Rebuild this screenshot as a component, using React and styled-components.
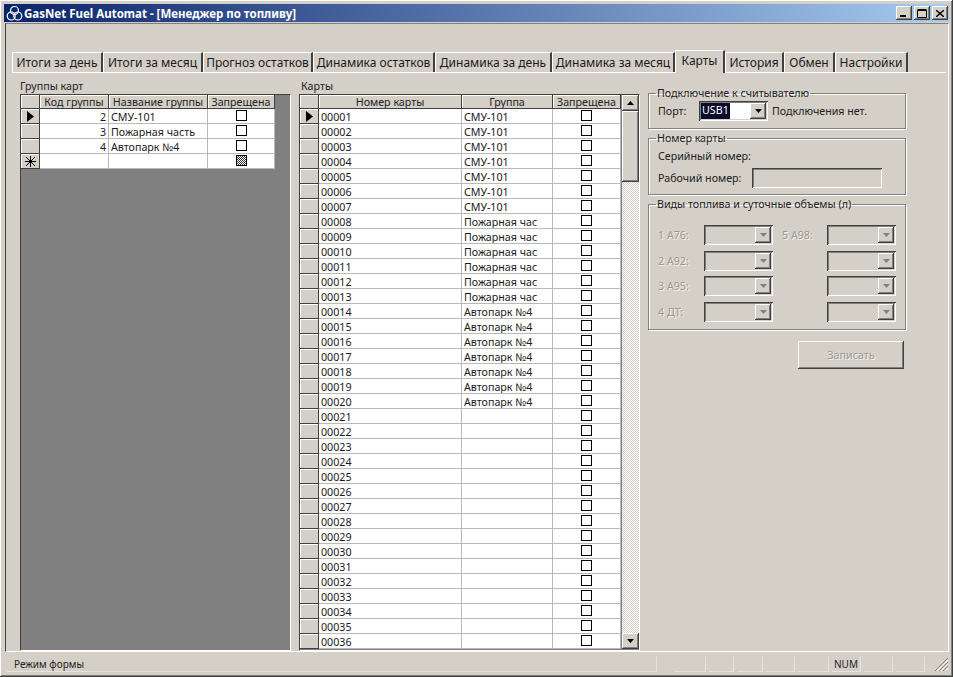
import React from 'react';
import styled, { createGlobalStyle, css } from 'styled-components';

const GlobalStyle = createGlobalStyle`
  html, body {
    margin: 0;
    padding: 0;
    background: #d4d0c8;
  }
  * {
    box-sizing: border-box;
  }
`;

const raised = css`
  box-shadow: inset -1px -1px #404040, inset 1px 1px #fff, inset -2px -2px #808080, inset 2px 2px #d4d0c8;
`;

const sunken = css`
  box-shadow: inset 1px 1px #404040, inset -1px -1px #fff, inset 2px 2px #808080, inset -2px -2px #d4d0c8;
`;

const Window = styled.div`
  width: 953px;
  height: 677px;
  padding: 4px;
  display: flex;
  flex-direction: column;
  background: #d4d0c8;
  overflow: hidden;
  font-family: "Noto Sans", "DejaVu Sans", sans-serif;
  font-size: 10.7px;
  color: #000;
  ${raised}
`;

const TitleBar = styled.div`
  height: 18px;
  flex: none;
  display: flex;
  align-items: center;
  padding: 0 1px 0 2px;
  background: linear-gradient(90deg, #0a246a 0%, #a6caf0 100%);
  color: #fff;
  font-weight: bold;
  font-size: 11.5px;
`;

const TitleText = styled.span`
  flex: 1;
  margin-left: 1px;
  white-space: nowrap;
`;

const CaptionButton = styled.button`
  width: 16px;
  height: 14px;
  margin-left: ${(p) => p.$gap || 0}px;
  padding: 0;
  border: 0;
  display: flex;
  align-items: center;
  justify-content: center;
  background: #d4d0c8;
  ${raised}
`;

const Client = styled.div`
  flex: 1;
  min-height: 0;
  margin: 1px 0 0 1px;
  display: flex;
  flex-direction: column;
  padding-top: 26px;
  border: 1px solid;
  border-color: #808080 #fff #fff #404040;
`;

const TabStrip = styled.div`
  height: 23px;
  flex: none;
  margin: 0 2px 0 6px;
  display: flex;
  align-items: flex-end;
  border-bottom: 1px solid #fff;
`;

const Tab = styled.div`
  width: ${(p) => p.$w}px;
  height: ${(p) => (p.$active ? 23 : 20)}px;
  margin-bottom: ${(p) => (p.$active ? -1 : 0)}px;
  padding-bottom: ${(p) => (p.$active ? 3 : 0)}px;
  flex: none;
  display: flex;
  align-items: center;
  justify-content: center;
  white-space: nowrap;
  font-size: 12px;
  color: #1a1a1a;
  background: #d4d0c8;
  border-top: 1px solid #fff;
  border-left: 1px solid #fff;
  border-right: 2px solid #404040;
`;

const Content = styled.div`
  flex: 1;
  min-height: 0;
  display: flex;
  gap: 8px;
  padding: 7px 0 0 14px;
`;

const Column = styled.div`
  width: ${(p) => p.$w}px;
  flex: none;
  display: flex;
  flex-direction: column;
`;

const SideColumn = styled(Column)`
  margin-top: 7px;
`;

const Caption = styled.div`
  height: 14px;
  padding-left: ${(p) => p.$pad || 0}px;
  line-height: 12px;
  color: #222;
`;

const GridFrame = styled.div`
  flex: 1;
  min-height: 0;
  display: flex;
  align-items: flex-start;
  overflow: hidden;
  background: #808080;
  border: 1px solid;
  border-color: #404040 #fff #fff #404040;
`;

const Table = styled.table`
  flex: none;
  table-layout: fixed;
  border-collapse: separate;
  border-spacing: 0;
  width: ${(p) => p.$w}px;
  font-size: inherit;
`;

const HeadCell = styled.th`
  width: ${(p) => p.$w}px;
  height: 14px;
  padding: 0;
  font-weight: normal;
  line-height: 12px;
  text-align: center;
  white-space: nowrap;
  overflow: hidden;
  background: #d4d0c8;
  color: #222;
  border-right: 1px solid #404040;
  border-bottom: 1px solid #404040;
  box-shadow: inset 1px 1px #fff;
`;

const RowHead = styled.td`
  height: 15px;
  padding: 0;
  background: #d4d0c8;
  border-right: 1px solid #404040;
  border-bottom: 1px solid #404040;
  box-shadow: inset 1px 1px #fff;
  text-align: center;
  line-height: 0;
`;

const Cell = styled.td`
  height: 15px;
  padding: 2px 2px 0;
  line-height: 12px;
  background: #fff;
  color: #1a1a1a;
  white-space: nowrap;
  overflow: hidden;
  text-align: ${(p) => p.$align || 'left'};
  border-right: 1px solid #b9b9b9;
  border-bottom: 1px solid #b9b9b9;
`;

const CheckCell = styled(Cell)`
  padding: 0;
  vertical-align: top;
`;

const Check = styled.div`
  width: 11px;
  height: 11px;
  margin: 1px auto 0;
  border: 1px solid #000;
  background: ${(p) => (p.$mixed
    ? 'repeating-conic-gradient(#333 0% 25%, #fff 0% 50%) 0 0 / 2px 2px'
    : '#fff')};
`;

const Scrollbar = styled.div`
  width: 17px;
  align-self: stretch;
  flex: none;
  margin: 0 1px 1px 1px;
  display: flex;
  flex-direction: column;
  background: repeating-conic-gradient(#d4d0c8 0% 25%, #fff 0% 50%) 0 0 / 2px 2px;
`;

const ScrollButton = styled.div`
  height: 16px;
  flex: none;
  display: flex;
  align-items: center;
  justify-content: center;
  background: #d4d0c8;
  ${raised}
`;

const ScrollThumb = styled.div`
  height: 71px;
  flex: none;
  background: #d4d0c8;
  ${raised}
`;

const ScrollTrack = styled.div`
  flex: 1;
`;

const Group = styled.fieldset`
  margin: 0 0 ${(p) => p.$mb || 0}px;
  padding: ${(p) => p.$pt ?? 2}px 0 0 9px;
  height: ${(p) => p.$h}px;
  min-width: 0;
  border: 1px solid #808080;
  box-shadow: 1px 1px #fff, inset 1px 1px #fff;
  color: #222;
`;

const GroupTitle = styled.legend`
  margin-left: -2px;
  padding: 0 1px;
  line-height: 13px;
`;

const PortRow = styled.div`
  display: flex;
  align-items: center;
  height: 20px;
`;

const PortLabel = styled.span`
  width: 41px;
  flex: none;
`;

const Combo = styled.div`
  width: 69px;
  height: 20px;
  flex: none;
  padding: 2px;
  display: flex;
  align-items: stretch;
  justify-content: space-between;
  background: ${(p) => (p.$disabled ? '#d4d0c8' : '#fff')};
  ${sunken}
`;

const ComboValue = styled.span`
  padding: 0 1px;
  line-height: 15px;
  background: #0a0a2a;
  color: #fff;
`;

const ComboArrow = styled.div`
  width: 16px;
  flex: none;
  display: flex;
  align-items: center;
  justify-content: center;
  background: #d4d0c8;
  ${raised}
`;

const PortStatus = styled.span`
  margin-left: 4px;
  white-space: nowrap;
`;

const InfoRow = styled.div`
  display: flex;
  align-items: center;
  height: 21px;
`;

const SerialRow = styled(InfoRow)`
  padding-bottom: 2px;
`;

const InfoLabel = styled.span`
  width: 94px;
  flex: none;
  white-space: nowrap;
`;

const NumberField = styled.div`
  width: 130px;
  height: 20px;
  ${sunken}
`;

const FuelGrid = styled.div`
  display: grid;
  grid-template-columns: 42px 69px 46px 69px;
  column-gap: 4px;
  grid-auto-rows: 20px;
  row-gap: 5.7px;
  align-items: center;
  margin-top: 12px;
`;

const FuelLabel = styled.span`
  padding-left: ${(p) => p.$indent || 0}px;
  color: #9a9790;
  text-shadow: 1px 1px #f4f2ee;
  white-space: nowrap;
`;

const SaveButton = styled.button`
  width: 106px;
  height: 28px;
  margin: 11px 0 0 150px;
  flex: none;
  border: 0;
  padding: 0;
  font: inherit;
  color: #9a9790;
  text-shadow: 1px 1px #f4f2ee;
  background: #d4d0c8;
  ${raised}
`;

const StatusBar = styled.div`
  height: 21px;
  flex: none;
  display: flex;
  align-items: flex-end;
  padding: 0 0 1px 3px;
  font-size: 10px;
  color: #222;
`;

const Pane = styled.div`
  width: ${(p) => p.$w}px;
  margin-right: ${(p) => p.$gap ?? 3}px;
  height: 16px;
  flex: none;
  padding-left: ${(p) => p.$pad || 0}px;
  line-height: 16px;
  white-space: nowrap;
  border-right: 1px solid #e6e3dc;
  border-bottom: 1px solid #e6e3dc;
`;

const Grip = styled.svg`
  margin-left: auto;
  flex: none;
`;

const ArrowDown = ({ color = '#000' }) => (
  <svg width="7" height="4" viewBox="0 0 7 4"><path d="M0 0h7L3.5 4z" fill={color} /></svg>
);

const groupColumns = [
  { title: '', w: 19 },
  { title: 'Код группы', w: 69 },
  { title: 'Название группы', w: 99 },
  { title: 'Запрещена', w: 67 },
];

const cardColumns = [
  { title: '', w: 19 },
  { title: 'Номер карты', w: 143 },
  { title: 'Группа', w: 91 },
  { title: 'Запрещена', w: 68 },
];

const groups = [
  { id: 2, name: 'СМУ-101' },
  { id: 3, name: 'Пожарная часть' },
  { id: 4, name: 'Автопарк №4' },
];

const groupOf = (n) => {
  if (n <= 7) return 'СМУ-101';
  if (n <= 13) return 'Пожарная час';
  if (n <= 20) return 'Автопарк №4';
  return '';
};

const cards = Array.from({ length: 36 }, (_, i) => ({
  number: String(i + 1).padStart(5, '0'),
  group: groupOf(i + 1),
}));

const tabs = [
  { title: 'Итоги за день', w: 91 },
  { title: 'Итоги за месяц', w: 100 },
  { title: 'Прогноз остатков', w: 110 },
  { title: 'Динамика остатков', w: 122 },
  { title: 'Динамика за день', w: 117 },
  { title: 'Динамика за месяц', w: 123 },
  { title: 'Карты', w: 50, active: true },
  { title: 'История', w: 59 },
  { title: 'Обмен', w: 51 },
  { title: 'Настройки', w: 73 },
];

const fuels = [
  ['1 А76:', '5 А98:'],
  ['2 А92:', ''],
  ['3 А95:', ''],
  ['4 ДТ:', ''],
];

const statusPanes = [
  { w: 650, gap: 18, text: 'Режим формы', pad: 7 },
  { w: 31 },
  { w: 25 },
  { w: 26 },
  { w: 29 },
  { w: 31 },
  { w: 29, text: 'NUM', pad: 2 },
  { w: 29 },
  { w: 29 },
];

const Pointer = () => (
  <svg width="7" height="11" viewBox="0 0 7 11"><path d="M0 0l7 5.5L0 11z" fill="#000" /></svg>
);

const NewRow = () => (
  <svg width="11" height="11" viewBox="0 0 11 11" stroke="#000" strokeWidth="1">
    <path d="M5.5 0v11M1 1l9 9M10 1l-9 9M0 5.5h11" />
  </svg>
);

const Logo = () => (
  <svg width="17" height="17" viewBox="0 0 17 17" fill="none" stroke="#fff" strokeWidth="1.2">
    <circle cx="8.5" cy="5.5" r="4" />
    <circle cx="5.2" cy="11" r="4" />
    <circle cx="11.8" cy="11" r="4" />
  </svg>
);

export default function App() {
  return (
    <Window>
      <GlobalStyle />
      <TitleBar>
        <Logo />
        <TitleText>GasNet Fuel Automat - [Менеджер по топливу]</TitleText>
        <CaptionButton>
          <svg width="8" height="8" viewBox="0 0 8 8"><path d="M0 6h6v2H0z" fill="#000" /></svg>
        </CaptionButton>
        <CaptionButton $gap={2}>
          <svg width="10" height="9" viewBox="0 0 10 9" fill="none" stroke="#000">
            <path d="M.5 1.5h9v7h-9zM.5 .5h9" />
          </svg>
        </CaptionButton>
        <CaptionButton $gap={2}>
          <svg width="8" height="7" viewBox="0 0 8 7" stroke="#000" strokeWidth="1.4"><path d="M0 0l8 7M8 0L0 7" /></svg>
        </CaptionButton>
      </TitleBar>
      <Client>
        <TabStrip>
          {tabs.map((tab) => (
            <Tab key={tab.title} $w={tab.w} $active={tab.active}>{tab.title}</Tab>
          ))}
        </TabStrip>
        <Content>
          <Column $w={271}>
            <Caption>Группы карт</Caption>
            <GridFrame>
              <Table $w={254}>
                <thead>
                  <tr>
                    {groupColumns.map((col) => (
                      <HeadCell key={col.w + col.title} $w={col.w}>{col.title}</HeadCell>
                    ))}
                  </tr>
                </thead>
                <tbody>
                  {groups.map((group, i) => (
                    <tr key={group.id}>
                      <RowHead>{i === 0 && <Pointer />}</RowHead>
                      <Cell $align="right">{group.id}</Cell>
                      <Cell>{group.name}</Cell>
                      <CheckCell><Check /></CheckCell>
                    </tr>
                  ))}
                  <tr>
                    <RowHead><NewRow /></RowHead>
                    <Cell />
                    <Cell />
                    <CheckCell><Check $mixed /></CheckCell>
                  </tr>
                </tbody>
              </Table>
            </GridFrame>
          </Column>
          <Column $w={341}>
            <Caption $pad={2}>Карты</Caption>
            <GridFrame>
              <Table $w={321}>
                <thead>
                  <tr>
                    {cardColumns.map((col) => (
                      <HeadCell key={col.w + col.title} $w={col.w}>{col.title}</HeadCell>
                    ))}
                  </tr>
                </thead>
                <tbody>
                  {cards.map((card, i) => (
                    <tr key={card.number}>
                      <RowHead>{i === 0 && <Pointer />}</RowHead>
                      <Cell>{card.number}</Cell>
                      <Cell>{card.group}</Cell>
                      <CheckCell><Check /></CheckCell>
                    </tr>
                  ))}
                </tbody>
              </Table>
              <Scrollbar>
                <ScrollButton>
                  <svg width="7" height="4" viewBox="0 0 7 4"><path d="M0 4h7L3.5 0z" fill="#000" /></svg>
                </ScrollButton>
                <ScrollThumb />
                <ScrollTrack />
                <ScrollButton><ArrowDown /></ScrollButton>
              </Scrollbar>
            </GridFrame>
          </Column>
          <SideColumn $w={258}>
            <Group $h={42} $mb={3} $pt={1}>
              <GroupTitle>Подключение к считывателю</GroupTitle>
              <PortRow>
                <PortLabel>Порт:</PortLabel>
                <Combo>
                  <ComboValue>USB1</ComboValue>
                  <ComboArrow><ArrowDown /></ComboArrow>
                </Combo>
                <PortStatus>Подключения нет.</PortStatus>
              </PortRow>
            </Group>
            <Group $h={63} $mb={3} $pt={1}>
              <GroupTitle>Номер карты</GroupTitle>
              <SerialRow>
                <InfoLabel>Серийный номер:</InfoLabel>
              </SerialRow>
              <InfoRow>
                <InfoLabel>Рабочий номер:</InfoLabel>
                <NumberField />
              </InfoRow>
            </Group>
            <Group $h={132}>
              <GroupTitle>Виды топлива и суточные объемы (л)</GroupTitle>
              <FuelGrid>
                {fuels.map(([left, right]) => (
                  <React.Fragment key={left}>
                    <FuelLabel>{left}</FuelLabel>
                    <Combo $disabled>
                      <span />
                      <ComboArrow><ArrowDown color="#808080" /></ComboArrow>
                    </Combo>
                    <FuelLabel $indent={5}>{right}</FuelLabel>
                    <Combo $disabled>
                      <span />
                      <ComboArrow><ArrowDown color="#808080" /></ComboArrow>
                    </Combo>
                  </React.Fragment>
                ))}
              </FuelGrid>
            </Group>
            <SaveButton disabled>Записать</SaveButton>
          </SideColumn>
        </Content>
      </Client>
      <StatusBar>
        {statusPanes.map((pane, i) => (
          <Pane key={i} $w={pane.w} $gap={pane.gap} $pad={pane.pad}>{pane.text}</Pane>
        ))}
        <Grip width="15" height="15" viewBox="0 0 15 15" stroke="#808080" fill="none">
          <path d="M14 1L1 14M14 5L5 14M14 9L9 14" />
          <path d="M14 3L3 14M14 7L7 14M14 11L11 14" stroke="#fff" />
        </Grip>
      </StatusBar>
    </Window>
  );
}
